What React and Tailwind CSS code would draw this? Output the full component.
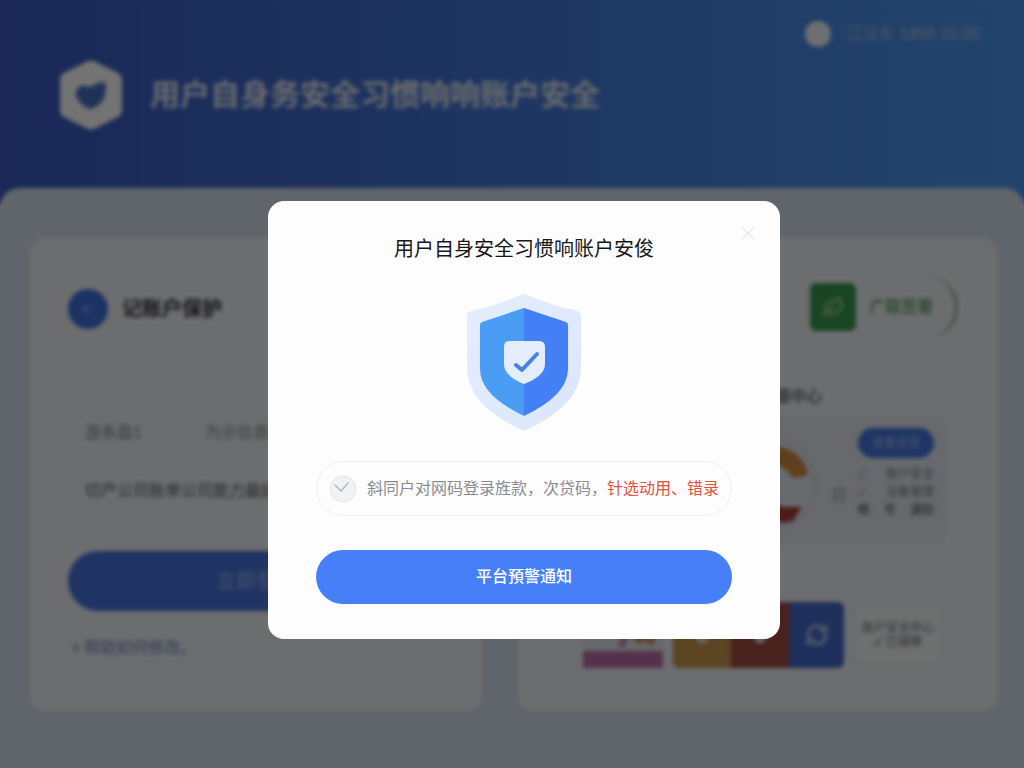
import { useState } from 'react';
import { X, ArrowLeft, Leaf, RefreshCw, Droplet } from 'lucide-react';

const FONT = "font-['Liberation_Sans','Noto_Sans_CJK_SC',sans-serif]";

function BrandLogo() {
  return (
    <svg className="h-[74px] w-[66px]" viewBox="0 0 66 74">
      <path d="M28 4q5-3 10 0L60 15q4 2 4 7v30q0 5-4 7L38 70q-5 3-10 0L6 59q-4-2-4-7V22q0-5 4-7z" fill="#fff" />
      <path d="M19 31q5-6 13-2 6-4 15-5 2 8-1 16-4 9-15 11-10-5-13-13-1-4 1-7z" fill="#4470c4" />
    </svg>
  );
}

function ShieldLogo() {
  return (
    <svg className="mx-auto mt-7 h-[138px] w-[116px]" viewBox="0 0 116 138">
      <defs>
        <linearGradient id="shieldRim" x1="0" y1="0" x2="1" y2="1">
          <stop offset="0" stopColor="#e3eefb" />
          <stop offset="1" stopColor="#dbe6fc" />
        </linearGradient>
      </defs>
      <path d="M56 1.5q2-1 4 0Q84 12 111 18q4 1 4 5v52q0 37-55 62-2 1-4 0Q1 112 1 75V23q0-4 4-5Q32 12 56 1.5z" fill="url(#shieldRim)" />
      <path d="M58 15 16 29q-2 1-2 3v44q0 26 44 47z" fill="#4a9df4" />
      <path d="M58 15l42 14q2 1 2 3v44q0 26-44 47z" fill="#4380f6" />
      <path d="M43 48h30q6 0 6 6v17q0 12-21 20Q38 83 38 71V54q0-6 5-6z" fill="#e4edfc" />
      <path d="M50 72l6 5 15-16" fill="none" stroke="#4a80ea" strokeWidth="4" strokeLinecap="round" strokeLinejoin="round" />
    </svg>
  );
}

function Chart() {
  return (
    <svg className="h-[100px] w-[100px]" viewBox="0 0 100 100">
      <circle cx="50" cy="48" r="45" fill="#e6ecf3" stroke="#b4bfcc" strokeWidth="2" strokeDasharray="2 3" />
      <path d="M50 10a36 34 0 0 1 38 28q-6 4-16 3Q66 30 50 28z" fill="#d08c40" />
      <path d="M50 80l4-14 8 5 20 0-9 14-12 2z" fill="#a83a38" />
    </svg>
  );
}

function ArtTile() {
  return (
    <svg className="h-[66px] w-[80px]" viewBox="0 0 80 66">
      <rect width="80" height="66" rx="4" fill="#e4e7ec" />
      <path d="M0 49h80v17H0z" fill="#bb6ea8" />
      <path d="M35 44l4-10 6 2-4 10z" fill="#c979b4" />
      <path d="M48 34h26l-4 10-8-4-8 2z" fill="#cf9a72" />
    </svg>
  );
}

function AccountCard() {
  return (
    <section className="flex-[452] min-w-0 rounded-2xl bg-[#f0f2f5] px-[38px] pt-[51px] pb-[51px]">
      <div className="flex items-center gap-[14px]">
        <button aria-label="返回" className="flex h-10 w-10 items-center justify-center rounded-full bg-[#4070e0] text-[#8fa9e8]"><ArrowLeft size={18} /></button>
        <h2 className="text-xl font-bold text-[#34363b]">记账户保护</h2>
      </div>
      <div className="mt-[76px] rounded-lg bg-[#eff2f5] px-[17px]">
        <div className="flex h-14 items-center gap-[63px] border-b border-[#e9ecef] text-base text-[#84888f]">
          <span>游系盘1</span>
          <span>为示信息</span>
        </div>
        <p className="h-14 overflow-hidden text-base leading-[60px] text-[#5c5f65]">切产公司账单公司能力最好</p>
      </div>
      <button className="mt-[34px] h-[60px] w-full rounded-full bg-[#4672dd] text-xl text-[#a3b8ec]">立即登录</button>
      <a href="#help" className="mt-[25px] block text-base leading-6 text-[#7288c4]">＋帮助如何修改。</a>
    </section>
  );
}

function ResourceCard() {
  return (
    <section className="flex-[480] min-w-0 rounded-2xl bg-[#f0f2f5] px-10 pt-[38px] pb-[43px]">
      <div className="flex h-[62px] items-center justify-end gap-[13px] rounded-full border-r-3 border-[#86b890] pr-[22px]">
        <span className="flex h-12 w-[46px] items-center justify-center rounded-md bg-[#3a9a4c] text-[#93cf9d]"><Leaf size={22} strokeWidth={3} /></span>
        <span className="text-base font-bold text-[#70ac7c]">广联签署</span>
      </div>
      <h3 className="mt-[45px] text-center text-base leading-7 font-medium text-[#5c6068]">安全账户资源中心</h3>
      <div className="mt-1 mr-3 flex h-[130px] items-start justify-end gap-[11px] rounded-lg bg-[#e4e9f0] pt-[13px] pr-3">
        <div className="pt-2"><Chart /></div>
        <span className="pt-14 text-base text-[#a0a5ad]">目</span>
        <div className="w-[76px]">
          <button className="h-[30px] w-full rounded-full bg-[#4676e0] text-xs text-[#a9bff0]">查看全部</button>
          <ul className="mt-[7px] text-xs leading-[18px] text-[#7a7e86]">
            <li className="flex justify-between"><span className="text-[#7c94c8]">✓</span><span>账户安全</span></li>
            <li className="flex justify-between"><span className="text-[#b08a70]">✓</span><span>设备管理</span></li>
            <li className="flex justify-between font-bold"><span>帐</span><span>号</span><span>通知</span></li>
          </ul>
        </div>
      </div>
      <div className="mt-[57px] flex items-center justify-end pr-[14px]">
        <ArtTile />
        <div className="ml-[10px] flex overflow-hidden rounded-md text-[#e8eaf0]">
          <span className="flex h-[66px] w-[58px] items-center justify-center bg-[#cb974c]"><Droplet size={18} fill="currentColor" /></span>
          <span className="flex h-[66px] w-[58px] items-center justify-center bg-[#a34a42]"><Droplet size={18} fill="currentColor" /></span>
          <span className="flex h-[66px] w-[55px] items-center justify-center bg-[#4468cc] text-[#a0b6ea]"><RefreshCw size={24} strokeWidth={4} /></span>
        </div>
        <div className="ml-2 flex h-[60px] w-[92px] flex-col items-center justify-center rounded-lg border border-[#d3d8de] bg-[#f4f5f7] text-xs leading-[14px] text-[#6c6f75]">
          <span>账户安全中心</span>
          <span>✓ 已保障</span>
        </div>
      </div>
    </section>
  );
}

function NoticeDialog({ onClose }) {
  return (
    <div className="fixed inset-0 z-50 flex items-center justify-center bg-black/55 pt-[72px] pl-6 backdrop-blur-[2px]">
      <div role="dialog" aria-modal="true" aria-labelledby="notice-title" className="relative w-full max-w-lg rounded-2xl bg-[#fdfdfd] px-12 pt-8 pb-[35px]">
        <button onClick={onClose} aria-label="关闭" className="absolute top-5 right-5 text-[#dededf]"><X size={24} strokeWidth={1} absoluteStrokeWidth /></button>
        <h1 id="notice-title" className="text-center text-xl leading-8 text-[#16181c]">用户自身安全习惯响账户安俊</h1>
        <ShieldLogo />
        <div className="mt-[30px] flex h-[55px] items-center gap-[10px] rounded-full border border-[#eceef0] px-3">
          <svg className="h-7 w-7 shrink-0" viewBox="0 0 28 28">
            <circle cx="14" cy="14" r="13" fill="#f1f2f4" stroke="#e3e5e8" />
            <path d="M6 10l6 6 7-8" fill="none" stroke="#b4b8be" strokeWidth="1.5" strokeLinecap="round" />
          </svg>
          <p className="text-base whitespace-nowrap text-[#8a8c90]">斜同户对网码登录旌款，次贷码，<span className="text-[#e0523f]">针选动用、错录</span></p>
        </div>
        <button onClick={onClose} className="mt-[34px] h-[54px] w-full rounded-full bg-[#467ff7] text-base font-medium text-white">平台預警通知</button>
      </div>
    </div>
  );
}

export default function App() {
  const [open, setOpen] = useState(true);

  return (
    <div className={`${FONT} flex min-h-screen flex-col bg-[#d6e0ee]`}>
      {/* Header */}
      <header className="bg-linear-to-r from-[#3a58c0] to-[#4c98f0] pt-5 pr-11 pb-20 pl-[58px]">
        <div className="flex h-7 items-center justify-end gap-4">
          <span className="h-[26px] w-[26px] rounded-full bg-[#f4f6fa]" />
          <span className="text-base text-[#b4c2dc]">江汉东 1898-15:00</span>
        </div>
        <div className="mt-[10px] flex items-center gap-[26px]">
          <BrandLogo />
          <span className="text-3xl font-bold text-[#e4e8f2]">用户自身务安全习惯响响账户安全</span>
        </div>
      </header>

      {/* Cards */}
      <main className="-mt-6 flex flex-1 items-start gap-9 rounded-t-[20px] bg-[#d6e0ee] pt-[50px] pr-[26px] pb-14 pl-[30px]">
        <AccountCard />
        <ResourceCard />
      </main>

      {open && <NoticeDialog onClose={() => setOpen(false)} />}
    </div>
  );
}
